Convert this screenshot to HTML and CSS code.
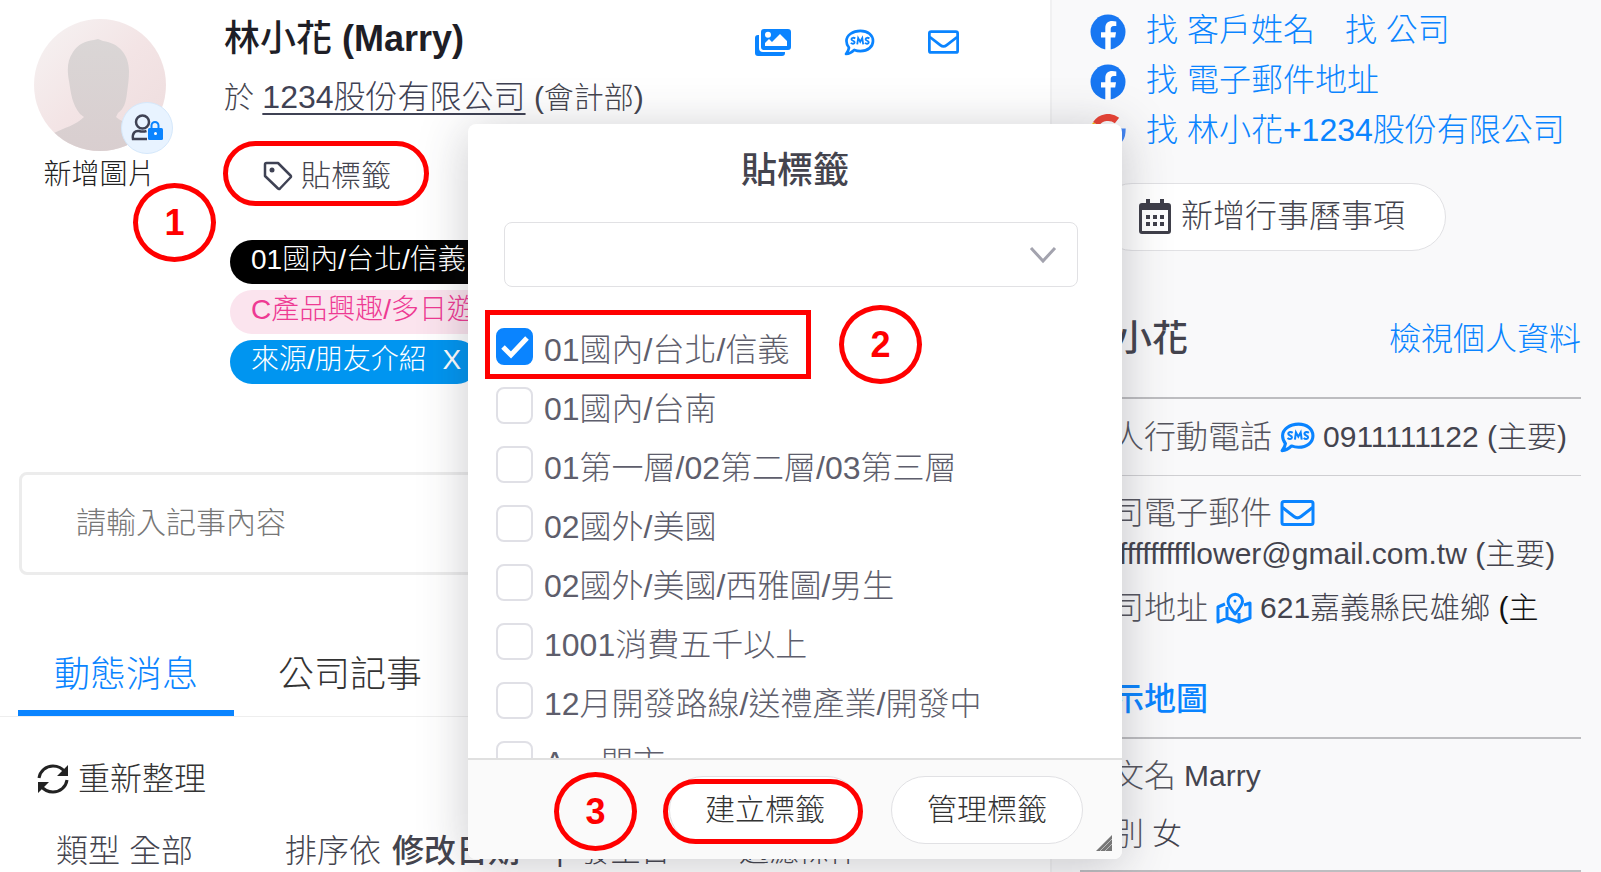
FILE: index.html
```html
<!DOCTYPE html>
<html lang="zh-Hant">
<head>
  <meta charset="UTF-8" />
  <meta name="viewport" content="width=device-width, initial-scale=1.0"/>
  <title>林小花 (Marry)</title>
  <link rel="stylesheet" href="styles.css">
</head>
<body>
  <!-- shared icons -->
  <svg class="icon-defs" aria-hidden="true">
    <symbol id="icon-sms" viewBox="0 0 34 30">
      <path d="M18 2C26.5 2 32 7 32 13.3S26.500 24.500 18 24.500c-2.500 0-4.800-.5-6.800-1.300C8.700 25.800 5.500 27.600 2 27.800c1.800-2.200 3-4.500 3.300-7C3.500 18.700 2.500 16.100 2.500 13.300 2.500 7 9.500 2 18 2z" fill="none" stroke="currentColor" stroke-width="3" stroke-linejoin="round"/>
      <path d="M12.300 10.500c-1.500-1.300-4.300-.9-4.300.9 0 2 3.800 1.300 3.600 3.500-.2 1.900-2.900 1.900-4.300.6M14.500 17l1-7 2.300 4.200 2.300-4.200 1 7M28 10.500c-1.500-1.300-4.300-.9-4.300.9 0 2 3.800 1.300 3.600 3.500-.2 1.900-2.900 1.900-4.300.6" fill="none" stroke="currentColor" stroke-width="2"/>
    </symbol>
    <symbol id="icon-mail" viewBox="0 0 34 26">
      <rect x="1.500" y="1.500" width="31" height="23" rx="2" fill="none" stroke="currentColor" stroke-width="3"/>
      <path d="M2 7.500l11.500 9c2.200 1.700 4.800 1.700 7 0L32 7.500" fill="none" stroke="currentColor" stroke-width="3"/>
    </symbol>
    <symbol id="icon-facebook" viewBox="0 0 36 36">
      <circle cx="18" cy="18" r="17.500" fill="#1877f2"/>
      <path d="M15.300 36V23.500H11v-5.200h4.300v-4c0-4.700 2.700-7.200 6.900-7.200 1.500 0 3 .2 4.100.4v4.500h-2.400c-2.500 0-3.200 1.500-3.200 3.100v3.200h5.300l-.8 5.200h-4.500V36z" fill="#fff"/>
    </symbol>
  </svg>

  <div class="page">
    <main class="contact">
      <header class="profile">
        <div class="avatar-col">
          <div class="avatar">
            <svg viewBox="0 0 132 132" width="132" height="132" aria-hidden="true">
              <defs>
                <linearGradient id="avatarBg" x1="0" y1="0" x2="1" y2="1">
                  <stop offset="0" stop-color="#f6f3f3"/>
                  <stop offset=".5" stop-color="#f3e4e5"/>
                  <stop offset="1" stop-color="#eddcdd"/>
                </linearGradient>
                <linearGradient id="avatarMan" x1="0" y1="0" x2="0" y2="1">
                  <stop offset="0" stop-color="#dad6d6"/>
                  <stop offset="1" stop-color="#d9cecf"/>
                </linearGradient>
                <clipPath id="avatarClip"><circle cx="66" cy="66" r="66"/></clipPath>
              </defs>
              <g clip-path="url(#avatarClip)">
                <rect width="132" height="132" fill="url(#avatarBg)"/>
                <path d="M20 114c10-5 22-8 30-16l-4-3c-8-10-9-20-11-33-2-11-2-20 4-29 5-8 12-11 21-12l4-1 5 2c16 2 26 14 26 30 0 8-1 14-2 22-1 9-3 16-9 20l-2 4c7 6 20 9 32 17v20H20z" fill="url(#avatarMan)"/>
              </g>
            </svg>
            <button class="avatar-badge" aria-label="權限">
              <svg viewBox="0 0 34 30" width="34" height="30">
                <circle cx="12.500" cy="9" r="6.500" fill="none" stroke="#3f4254" stroke-width="2.500"/>
                <path d="M17 26H3c-1-6 2-8.500 6-8 2.500.8 5 .8 7.500 0" fill="none" stroke="#3f4254" stroke-width="2.500"/>
                <path d="M21.500 16v-3.500a3.500 3.500 0 0 1 7 0V16" fill="none" stroke="#0a84ff" stroke-width="2"/>
                <rect x="18" y="15" width="15" height="12" rx="1.500" fill="#0a84ff"/>
                <circle cx="25.500" cy="20.500" r="1.500" fill="#fff"/>
              </svg>
            </button>
          </div>
          <a class="avatar-caption" href="#">新增圖片</a>
        </div>

        <div class="profile-info">
          <div class="name-row">
            <h1>林小花 <b>(Marry)</b></h1>
            <div class="quick-actions">
              <button aria-label="圖片">
                <svg viewBox="0 0 36 27" width="36" height="27">
                  <path d="M4 6H3a3 3 0 0 0-3 3v15a3 3 0 0 0 3 3h24a3 3 0 0 0 3-3v-1H8a4 4 0 0 1-4-4z" fill="currentColor"/>
                  <path fill-rule="evenodd" d="M9 0h24a3 3 0 0 1 3 3v15a3 3 0 0 1-3 3H9a3 3 0 0 1-3-3V3a3 3 0 0 1 3-3zm4 2.800a3 3 0 1 0 0 6 3 3 0 0 0 0-6zM10 17h22v-5l-7-7-8 8-3-3-4 4z" fill="currentColor"/>
                </svg>
              </button>
              <button aria-label="簡訊"><svg width="31" height="27"><use href="#icon-sms"/></svg></button>
              <button aria-label="郵件"><svg width="31" height="24"><use href="#icon-mail"/></svg></button>
            </div>
          </div>
          <p class="company-row">於 <a href="#">1234股份有限公司</a> (會計部)</p>
          <button class="tag-btn">
            <svg viewBox="0 0 30 30" width="30" height="30" aria-hidden="true">
              <path d="M2 3.500C2 2.500 2.500 2 3.500 2H15l12.500 12.500c.6.600.6 1.300 0 2L17 27.500c-.7.700-1.400.7-2 0L2 15z" fill="none" stroke="#3f4254" stroke-width="2.500" stroke-linejoin="round"/>
              <circle cx="9" cy="9" r="2.500" fill="#3f4254"/>
            </svg>
            貼標籤
          </button>
          <ul class="tags">
            <li class="tag tag-black">01國內/台北/信義 <button aria-label="移除">X</button></li>
            <li class="tag tag-pink">C產品興趣/多日遊 <button aria-label="移除">X</button></li>
            <li class="tag tag-blue">來源/朋友介紹 <button aria-label="移除">X</button></li>
          </ul>
        </div>
      </header>

      <input class="note-input" type="text" placeholder="請輸入記事內容" aria-label="請輸入記事內容">

      <nav class="tabs" role="tablist">
        <button class="active" role="tab" aria-selected="true">動態消息</button>
        <button role="tab" aria-selected="false">公司記事</button>
      </nav>

      <button class="refresh">
        <svg viewBox="0 0 32 30" width="32" height="30" aria-hidden="true">
          <path d="M2 14C3 7 9 2 16 2c5 0 9 2 12 6M30 16c-1 7-7 12-14 12-5 0-9-2-12-6" fill="none" stroke="#222" stroke-width="3"/>
          <path d="M31 1v11H20zM1 29V18h11z" fill="#222"/>
        </svg>
        重新整理
      </button>

      <div class="filters">
        <span class="filter-type">類型 全部</span>
        <span class="filter-sort">排序依 <b>修改日期</b></span>
        <span class="filter-date">|&nbsp; 發生日</span>
        <span class="filter-cond">過濾條件</span>
      </div>
    </main>

    <aside class="side">
      <div class="search-links">
        <div class="search-row">
          <svg width="36" height="36" aria-hidden="true"><use href="#icon-facebook"/></svg>
          <a href="#">找 客戶姓名</a>
          <a href="#">找 公司</a>
        </div>
        <div class="search-row">
          <svg width="36" height="36" aria-hidden="true"><use href="#icon-facebook"/></svg>
          <a href="#">找 電子郵件地址</a>
        </div>
        <div class="search-row">
          <svg viewBox="0 0 36 36" width="36" height="36" aria-hidden="true">
            <path d="M6 10A14.500 14.500 0 0 1 27 6.500" fill="none" stroke="#ea4335" stroke-width="7"/>
            <path d="M6 26a15 15 0 0 1 0-16" fill="none" stroke="#fbbc05" stroke-width="7"/>
            <path d="M27 28A15 15 0 0 1 6 26" fill="none" stroke="#34a853" stroke-width="7"/>
            <path d="M18 18h14a14 14 0 0 1-5 10" fill="none" stroke="#4285f4" stroke-width="7"/>
          </svg>
          <a href="#">找 林小花+1234股份有限公司</a>
        </div>
      </div>

      <button class="pill calendar-btn">
        <svg viewBox="0 0 32 36" width="32" height="36" aria-hidden="true">
          <path fill-rule="evenodd" d="M7 1h4v4h10V1h4v4h4a3 3 0 0 1 3 3v25a3 3 0 0 1-3 3H3a3 3 0 0 1-3-3V8a3 3 0 0 1 3-3h4zM3 12v21h26V12z" fill="#3f3f4a"/>
          <path d="M7 17h4v4H7zm7 0h4v4h-4zm7 0h4v4h-4zM7 24h4v4H7zm7 0h4v4h-4zm7 0h4v4h-4z" fill="#3f3f4a"/>
        </svg>
        新增行事曆事項
      </button>

      <div class="side-title">
        <h2>林小花</h2>
        <a href="#">檢視個人資料</a>
      </div>

      <div class="field field-phone">
        <span class="field-label">個人行動電話</span>
        <svg width="35" height="31" aria-hidden="true"><use href="#icon-sms"/></svg>
        <span class="field-value">0911111122 (主要)</span>
      </div>

      <div class="field-group">
        <div class="field">
          <span class="field-label">公司電子郵件</span>
          <svg width="35" height="26" aria-hidden="true"><use href="#icon-mail"/></svg>
        </div>
        <div class="field-value email">fffffffffffffflower@gmail.com.tw (主要)</div>
        <div class="field">
          <span class="field-label">公司地址</span>
          <svg viewBox="0 0 36 32" width="36" height="32" aria-hidden="true">
            <path d="M9 12L2 15v15l9-4 12 4 11-4V11l-6 2M11 15v11M23 21v9" fill="none" stroke="currentColor" stroke-width="3" stroke-linejoin="round"/>
            <path d="M19 22c-4-5-7-9-7-12.500a7 7 0 0 1 14.500 0C26.500 13 23 17 19 22z" fill="none" stroke="currentColor" stroke-width="3" stroke-linejoin="round"/>
            <circle cx="19" cy="9" r="1.500" fill="currentColor"/>
          </svg>
          <span class="field-value">621嘉義縣民雄鄉 <span class="main-mark">(主</span></span>
        </div>
        <a class="map-link" href="#">顯示地圖</a>
      </div>

      <div class="field-group names">
        <div class="field"><span class="field-label">英文名</span><span class="field-value">Marry</span></div>
        <div class="field"><span class="field-label">性別</span><span class="field-value">女</span></div>
      </div>
    </aside>

    <div class="modal" role="dialog" aria-labelledby="tagTitle">
      <h3 id="tagTitle">貼標籤</h3>
      <select class="tag-select" aria-label="貼標籤">
        <option></option>
      </select>
      <div class="tag-list">
        <label><input type="checkbox" checked> 01國內/台北/信義</label>
        <label><input type="checkbox"> 01國內/台南</label>
        <label><input type="checkbox"> 01第一層/02第二層/03第三層</label>
        <label><input type="checkbox"> 02國外/美國</label>
        <label><input type="checkbox"> 02國外/美國/西雅圖/男生</label>
        <label><input type="checkbox"> 1001消費五千以上</label>
        <label><input type="checkbox"> 12月開發路線/送禮產業/開發中</label>
        <label><input type="checkbox"> A__開市</label>
      </div>
      <footer class="modal-footer">
        <button class="pill">建立標籤</button>
        <button class="pill">管理標籤</button>
        <svg class="grip" viewBox="0 0 16 16" width="16" height="16" aria-hidden="true">
          <path d="M16 0v16H0z" fill="#777"/>
          <path d="M4 16L16 4M9 16l7-7" stroke="#bbb" stroke-width="1"/>
        </svg>
      </footer>
    </div>

    <!-- step marks -->
    <div class="mark mark-pill mark-tag"></div>
    <div class="mark mark-circle mark-1">1</div>
    <div class="mark mark-check"></div>
    <div class="mark mark-circle mark-2">2</div>
    <div class="mark mark-pill mark-create"></div>
    <div class="mark mark-circle mark-3">3</div>
  </div>
</body>
</html>
```
FILE: styles.css
```css
:root {
  --blue: #0a84ff;
  --text: #3f4254;
  --dark: #222;
  --line: #bdbdc0;
  --red: #ff0000;
}

* {
  box-sizing: border-box;
}

body {
  margin: 0;
  font-family: "Liberation Sans", "Noto Sans CJK TC", sans-serif;
  font-weight: 300;
  font-size: 32px;
  line-height: 40px;
  color: #44444e;
  background: #fff;
  overflow: hidden;
}

button, input, select {
  font: inherit;
  color: inherit;
}

button {
  border: none;
  background: none;
  padding: 0;
  cursor: pointer;
}

a {
  color: var(--blue);
  text-decoration: none;
}

h1, h2, h3, p, ul {
  margin: 0;
  padding: 0;
}

h1, h2, h3 {
  font-size: 36px;
  font-weight: 500;
}

svg {
  display: block;
  flex-shrink: 0;
}

.icon-defs {
  position: absolute;
  width: 0;
  height: 0;
}

.page {
  position: relative;
  display: grid;
  grid-template-columns: minmax(0, 1fr) 551px;
  height: 100vh;
  overflow: hidden;
  white-space: nowrap;
}

/* left column */
.profile {
  display: flex;
  gap: 59px;
  height: 472px;
  padding: 19px 91px 0 34px;
}

.avatar-col {
  width: 131px;
  text-align: center;
}

.avatar {
  position: relative;
}

.avatar-badge {
  position: absolute;
  left: 87px;
  top: 83px;
  width: 52px;
  height: 52px;
  display: flex;
  align-items: center;
  justify-content: center;
  border: 1px solid #d5e8fb;
  border-radius: 50%;
  background: #e8f3ff;
}

.avatar-caption {
  display: block;
  margin-top: 4px;
  font-size: 28px;
  color: var(--dark);
}

.profile-info {
  flex: 1;
}

.name-row {
  display: flex;
  justify-content: space-between;
  align-items: center;
}

.name-row h1 {
  color: #1e1e26;
}

.quick-actions {
  display: flex;
  align-items: center;
  gap: 53px;
  padding-top: 6px;
  color: var(--blue);
}

.company-row {
  margin-top: 18px;
  font-size: 30px;
}

.company-row a {
  font-size: 32px;
  color: var(--text);
  text-decoration: underline;
  text-decoration-thickness: 2px;
  text-underline-offset: 5px;
}

.tag-btn {
  display: flex;
  align-items: center;
  gap: 8px;
  margin-top: 26px;
  padding: 12px 39px;
  font-size: 30px;
}

.tags {
  list-style: none;
  display: flex;
  flex-direction: column;
  align-items: flex-start;
  gap: 6px;
  margin: 32px 0 0 6px;
}

.tag {
  height: 44px;
  padding: 0 18px 0 21px;
  border-radius: 22px;
  font-size: 28px;
}

.tag button {
  margin-left: 8px;
}

.tag-black {
  background: #000;
  color: #fff;
}

.tag-pink {
  background: #fbe4ee;
  color: #ee3a93;
}

.tag-blue {
  background: #0095f0;
  color: #fff;
}

.note-input {
  display: block;
  width: calc(100% - 38px);
  height: 103px;
  margin-left: 19px;
  padding: 0 54px 2px;
  border: 3px solid #ececec;
  border-radius: 8px;
  font-size: 30px;
}

.note-input::placeholder {
  color: #777;
  opacity: 1;
}

.tabs {
  display: flex;
  gap: 8px;
  margin-top: 58px;
  padding-left: 18px;
  border-bottom: 1px solid #eee;
  font-size: 36px;
}

.tabs button {
  height: 83px;
  padding: 6px 36px 0;
  border-bottom: 6px solid transparent;
  color: #333;
}

.tabs button.active {
  border-color: var(--blue);
  color: var(--blue);
}

.refresh {
  display: flex;
  align-items: center;
  gap: 9px;
  margin: 42px 0 0 37px;
  color: #333;
}

.filters {
  display: flex;
  align-items: center;
  margin: 32px 0 0 56px;
}

.filter-type {
  width: 229px;
}

.filter-sort {
  width: 271px;
}

.filter-sort b {
  margin-left: 2px;
  font-weight: 500;
}

.filter-date {
  width: 183px;
  font-size: 30px;
}

.filter-cond {
  font-size: 30px;
}

/* right column */
.side {
  padding: 5px 20px 0 28px;
  background: #f9f9fa;
  border-left: 2px solid #f1f1f2;
}

.search-links {
  padding-left: 10px;
}

.search-row {
  display: flex;
  align-items: center;
  height: 50px;
}

.search-row svg {
  margin-top: 4px;
}

.search-row a {
  margin-left: 20px;
}

.search-row a + a {
  margin-left: 30px;
}

.pill {
  display: flex;
  align-items: center;
  height: 68px;
  padding: 0 35px;
  border: 1px solid #e1e1e4;
  border-radius: 34px;
  background: #fff;
}

.calendar-btn {
  gap: 10px;
  margin: 28px 0 0 18px;
  padding: 0 40px 2px;
}

.side-title {
  display: flex;
  justify-content: space-between;
  align-items: center;
  height: 148px;
  padding-top: 30px;
  border-bottom: 2px solid var(--line);
}

.field {
  display: flex;
  align-items: center;
  gap: 8px;
}

.field svg {
  color: var(--blue);
}

.field-label {
  color: #55555e;
}

.field-value {
  font-size: 30px;
}

.field-phone {
  height: 77px;
  border-bottom: 1px solid #cfcfd2;
}

.field-group {
  padding-top: 17px;
  border-bottom: 2px solid var(--line);
}

.email {
  margin: 1px 0 14px;
  font-variant-ligatures: none;
}

.main-mark {
  color: #111;
}

.map-link {
  display: block;
  margin: 51px 0 18px;
  font-weight: 500;
}

.names {
  display: flex;
  flex-direction: column;
  gap: 18px;
  padding-bottom: 16px;
}

/* tag dialog */
.modal {
  position: absolute;
  left: 468px;
  top: 124px;
  width: 654px;
  display: flex;
  flex-direction: column;
  background: #fff;
  border-radius: 8px;
  box-shadow: 0 6px 50px rgba(50, 50, 60, 0.26);
}

.modal h3 {
  padding: 27px 0 31px;
  text-align: center;
}

.tag-select {
  height: 65px;
  margin: 0 44px 0 36px;
  padding: 0 20px;
  appearance: none;
  border: 1px solid #e1e1e4;
  border-radius: 8px;
  background: #fff url("data:image/svg+xml,%3Csvg xmlns='http://www.w3.org/2000/svg' width='28' height='18' fill='none' stroke='%23a3a3ae' stroke-width='3'%3E%3Cpath d='M2 2l12 13L26 2'/%3E%3C/svg%3E") no-repeat right 20px center;
}

.tag-list {
  height: 471px;
  padding: 33px 28px 0;
  overflow: hidden;
  color: #5e5e6c;
}

.tag-list label {
  display: flex;
  align-items: center;
  gap: 11px;
  height: 59px;
}

.tag-list input {
  appearance: none;
  width: 37px;
  height: 37px;
  margin: 0 0 6px;
  border: 2px solid #e0e0e6;
  border-radius: 8px;
  background: #fff;
}

.tag-list input:checked {
  border-color: var(--blue);
  background: var(--blue) url("data:image/svg+xml,%3Csvg xmlns='http://www.w3.org/2000/svg' width='28' height='24' fill='none' stroke='white' stroke-width='5'%3E%3Cpath d='M2 12l8 8L26 3'/%3E%3C/svg%3E") no-repeat center;
}

.modal-footer {
  position: relative;
  display: flex;
  justify-content: flex-end;
  gap: 30px;
  padding: 16px 39px 15px;
  border-top: 2px solid #e0e0e0;
  border-radius: 0 0 8px 8px;
  background: #fafafa;
  font-size: 30px;
  color: #333;
}

.grip {
  position: absolute;
  right: 10px;
  bottom: 8px;
}

/* red step marks laid over the page */
.mark {
  position: absolute;
  border: 5px solid var(--red);
  pointer-events: none;
}

.mark-pill {
  height: 65px;
  border-radius: 33px;
}

.mark-circle {
  display: flex;
  align-items: center;
  justify-content: center;
  width: 83px;
  height: 79px;
  border-radius: 50%;
  font-size: 36px;
  font-weight: 700;
  color: var(--red);
}

.mark-tag {
  left: 223px;
  top: 141px;
  width: 206px;
}

.mark-1 {
  left: 133px;
  top: 183px;
}

.mark-check {
  left: 485px;
  top: 310px;
  width: 326px;
  height: 69px;
}

.mark-2 {
  left: 839px;
  top: 305px;
}

.mark-create {
  left: 663px;
  top: 779px;
  width: 200px;
}

.mark-3 {
  left: 554px;
  top: 772px;
}
```
